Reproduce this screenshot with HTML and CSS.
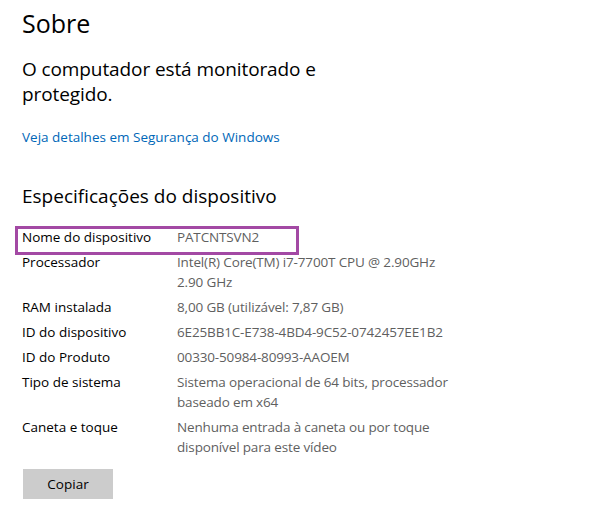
FILE: index.html
```html
<!DOCTYPE html>
<html lang="pt-BR">
<head>
  <meta charset="UTF-8">
  <title>Sobre</title>
  <link rel="stylesheet" href="styles.css">
</head>
<body>
  <main class="page">
    <h1 class="title">Sobre</h1>

    <section class="security">
      <p class="security-status">O computador está monitorado e protegido.</p>
      <a class="link" href="#">Veja detalhes em Segurança do Windows</a>
    </section>

    <section class="specs">
      <h2 class="subtitle">Especificações do dispositivo</h2>
      <dl class="spec-list">
        <div class="spec-row highlight">
          <dt>Nome do dispositivo</dt>
          <dd>PATCNTSVN2</dd>
        </div>
        <div class="spec-row">
          <dt>Processador</dt>
          <dd>Intel(R) Core(TM) i7-7700T CPU @ 2.90GHz   2.90 GHz</dd>
        </div>
        <div class="spec-row">
          <dt>RAM instalada</dt>
          <dd>8,00 GB (utilizável: 7,87 GB)</dd>
        </div>
        <div class="spec-row">
          <dt>ID do dispositivo</dt>
          <dd>6E25BB1C-E738-4BD4-9C52-0742457EE1B2</dd>
        </div>
        <div class="spec-row">
          <dt>ID do Produto</dt>
          <dd>00330-50984-80993-AAOEM</dd>
        </div>
        <div class="spec-row">
          <dt>Tipo de sistema</dt>
          <dd>Sistema operacional de 64 bits, processador baseado em x64</dd>
        </div>
        <div class="spec-row">
          <dt>Caneta e toque</dt>
          <dd>Nenhuma entrada à caneta ou por toque disponível para este vídeo</dd>
        </div>
      </dl>
      <button class="btn-copy" type="button">Copiar</button>
    </section>
  </main>
</body>
</html>
```

FILE: styles.css
```css
:root {
  --text: #000000; --muted: #5f5f5f; --link: #0067b8;
  --button: #cccccc; --mark: #a349a4; --background: #ffffff;
}

* {
  margin: 0; padding: 0; box-sizing: border-box;
  font-family: 'Open Sans', 'Noto Sans', 'Liberation Sans', sans-serif;
}

body {
  background: var(--background); color: var(--text);
  -webkit-font-smoothing: antialiased;
}

.page { padding: 7px 22px 0; }

.title {
  font-size: 25px; line-height: 32px; font-weight: 400;
}

.security { display: flex; flex-direction: column; align-items: flex-start; }

.security-status {
  font-size: 19px; line-height: 25px; letter-spacing: -0.1px;
  max-width: 330px; margin-top: 18px;
}

.link {
  font-size: 13.5px; line-height: 20px; color: var(--link);
  text-decoration: none; margin-top: 20px;
}

.subtitle {
  font-size: 19px; line-height: 28px; font-weight: 400;
  margin-top: 35px;
}

.spec-list {
  display: flex; flex-direction: column; gap: 5px;
  margin-top: 17px; font-size: 13.5px; line-height: 20px;
}

.spec-row {
  display: grid; grid-template-columns: 155px 280px;
  position: relative;
}
.spec-row dd {
  color: var(--muted); white-space: pre-line; letter-spacing: -0.15px;
}

/* annotation box drawn over the first row */
.highlight::after {
  content: ''; position: absolute; left: -7px; top: -1px;
  width: 278px; height: 23px; border: 3px solid var(--mark);
}

.btn-copy {
  margin-top: 12px; width: 90px; padding: 5px 0; margin-left: 1px;
  border: none; background: var(--button); color: var(--text);
  font-size: 13.5px; line-height: 20px; cursor: pointer;
}
```
